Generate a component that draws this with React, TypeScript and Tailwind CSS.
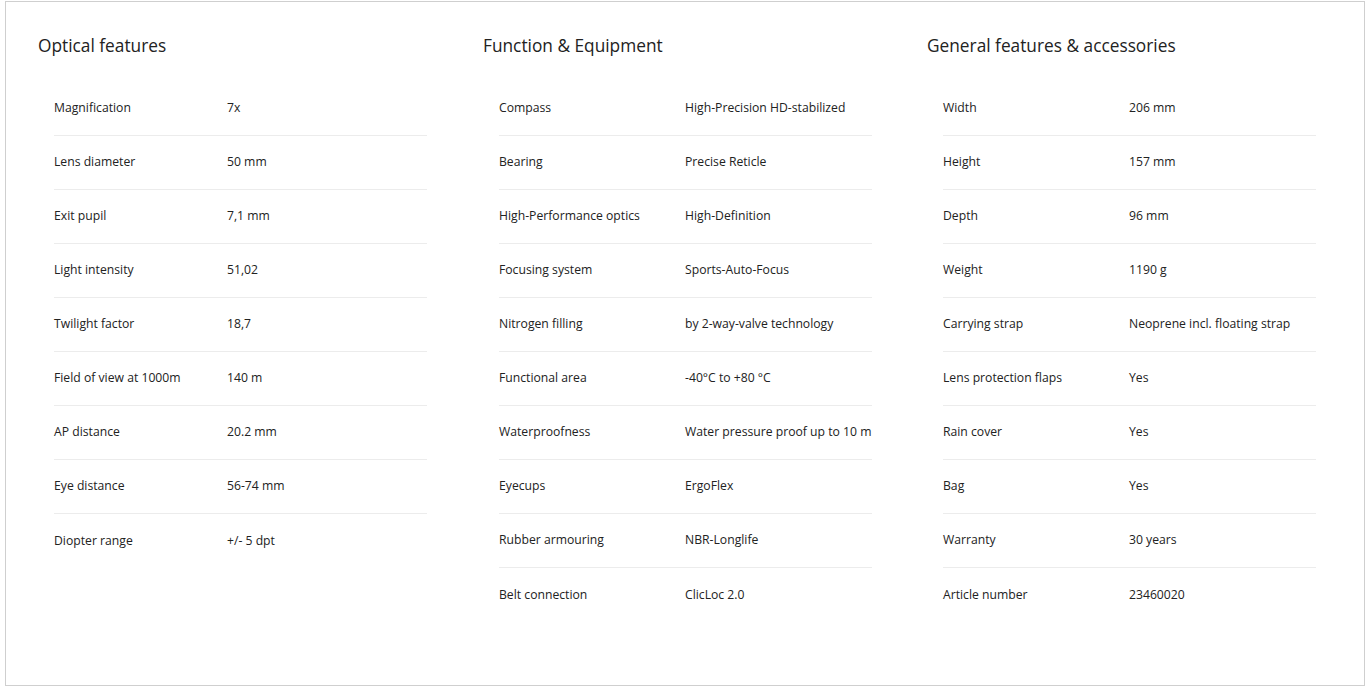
type Spec = [string, string];

type Group = {
  title: string;
  labelWidth: string;
  rows: Spec[];
};

const groups: Group[] = [
  {
    title: "Optical features",
    labelWidth: "w-[173px]",
    rows: [
      ["Magnification", "7x"],
      ["Lens diameter", "50 mm"],
      ["Exit pupil", "7,1 mm"],
      ["Light intensity", "51,02"],
      ["Twilight factor", "18,7"],
      ["Field of view at 1000m", "140 m"],
      ["AP distance", "20.2 mm"],
      ["Eye distance", "56-74 mm"],
      ["Diopter range", "+/- 5 dpt"],
    ],
  },
  {
    title: "Function & Equipment",
    labelWidth: "w-[186px]",
    rows: [
      ["Compass", "High-Precision HD-stabilized"],
      ["Bearing", "Precise Reticle"],
      ["High-Performance optics", "High-Definition"],
      ["Focusing system", "Sports-Auto-Focus"],
      ["Nitrogen filling", "by 2-way-valve technology"],
      ["Functional area", "-40°C to +80 °C"],
      ["Waterproofness", "Water pressure proof up to 10 m"],
      ["Eyecups", "ErgoFlex"],
      ["Rubber armouring", "NBR-Longlife"],
      ["Belt connection", "ClicLoc 2.0"],
    ],
  },
  {
    title: "General features & accessories",
    labelWidth: "w-[186px]",
    rows: [
      ["Width", "206 mm"],
      ["Height", "157 mm"],
      ["Depth", "96 mm"],
      ["Weight", "1190 g"],
      ["Carrying strap", "Neoprene incl. floating strap"],
      ["Lens protection flaps", "Yes"],
      ["Rain cover", "Yes"],
      ["Bag", "Yes"],
      ["Warranty", "30 years"],
      ["Article number", "23460020"],
    ],
  },
];

function SpecColumn({ group }: { group: Group }) {
  return (
    <div className="flex flex-col">
      <h2 className="text-[17.3px] leading-6 text-[#222] font-normal">{group.title}</h2>
      <div className="mt-6 ml-4 w-[373px] flex flex-col">
        {group.rows.map(([label, value], i) => (
          <div
            key={label}
            className={`flex items-center h-[54px] text-[12.2px] text-[#222] ${
              i < group.rows.length - 1 ? "border-b border-[#ececec]" : ""
            }`}
          >
            <span className={`${group.labelWidth} shrink-0`}>{label}</span>
            <span className="whitespace-nowrap">{value}</span>
          </div>
        ))}
      </div>
    </div>
  );
}

export default function App() {
  return (
    <div
      className="w-[1369px] h-[689px] bg-white pl-[5px] pt-[1px]"
      style={{ fontFamily: '"Open Sans", "Liberation Sans", sans-serif' }}
    >
      <div className="w-[1360px] h-[685px] border border-[#cfcfcf] pl-8 pt-8 grid grid-cols-[445px_444px_444px]">
        {groups.map((g) => (
          <SpecColumn key={g.title} group={g} />
        ))}
      </div>
    </div>
  );
}
